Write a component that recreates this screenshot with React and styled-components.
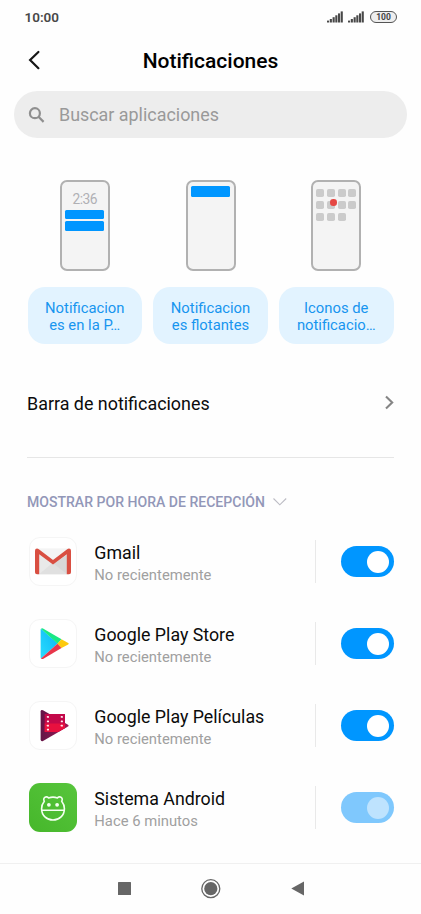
import React from "react";
import styled, { createGlobalStyle } from "styled-components";

const GlobalStyle = createGlobalStyle`
  * { box-sizing: border-box; }
  body {
    margin: 0;
    background: #fefefe;
    font-family: Roboto, "Noto Sans", sans-serif;
    color: #0b0b0b;
  }
  button { font: inherit; border: 0; padding: 0; background: none; color: inherit; }
  svg { display: block; flex: none; }
`;

const Screen = styled.div`
  width: 421px;
  height: 914px;
  display: flex;
  flex-direction: column;
  overflow: hidden;
`;

const StatusBar = styled.div`
  height: 34px;
  padding: 0 24px 0 24.5px;
  display: flex;
  align-items: center;
  justify-content: space-between;
`;

const Clock = styled.span`
  font-size: 13.5px;
  font-weight: 600;
  color: #484848;
`;

const StatusIcons = styled.div`
  display: flex;
  align-items: center;
  gap: 5px;
`;

const Battery = styled.span`
  width: 27px;
  height: 12px;
  margin-left: 1px;
  display: flex;
  align-items: center;
  justify-content: center;
  padding-top: 1px;
  border: 1.5px solid #555;
  border-radius: 6px;
  background: #eee;
  font-size: 8.5px;
  font-weight: 700;
  line-height: 9px;
  color: #444;
`;

const Header = styled.header`
  height: 57px;
  padding: 0 25px 4px;
  display: grid;
  grid-template-columns: 24px 1fr 24px;
  align-items: center;
`;

const Title = styled.h1`
  margin: 1px 0 0;
  text-align: center;
  font-size: 21px;
  line-height: 24px;
  font-weight: 500;
  color: #000;
`;

const SearchField = styled.label`
  height: 47px;
  margin: 0 14px;
  padding: 0 14px;
  display: flex;
  align-items: center;
  gap: 13px;
  border-radius: 24px;
  background: #ededed;
`;

const SearchHint = styled.span`
  padding-top: 1px;
  font-size: 17.9px;
  line-height: 22px;
  color: #999;
`;

const Styles = styled.section`
  margin: 42px 27.5px 0;
  display: grid;
  grid-template-columns: repeat(3, 114.5px);
  justify-content: space-between;
`;

const StyleOption = styled.div`
  display: flex;
  flex-direction: column;
  align-items: center;
  gap: 16px;
`;

const Phone = styled.div`
  width: 50px;
  height: 91px;
  padding: ${(p) => p.$top}px 3.5px 0;
  display: flex;
  flex-direction: column;
  gap: 2px;
  border: 2.4px solid #b1b1b1;
  border-radius: 7px;
  background: #f4f4f4;
`;

const PhoneClock = styled.span`
  height: 15.5px;
  text-align: center;
  font-size: 13.8px;
  line-height: 14px;
  letter-spacing: -0.5px;
  color: #b0b0b4;
`;

const Banner = styled.span`
  height: ${(p) => p.$height}px;
  flex: none;
  border-radius: 1.5px;
  background: #0096ff;
`;

const AppGrid = styled.div`
  position: relative;
  margin-left: -0.3px;
  display: grid;
  grid-template-columns: repeat(4, 8px);
  grid-auto-rows: 8px;
  gap: 4px 2.6px;
`;

const AppTile = styled.i`
  border-radius: 1.8px;
  background: #cbcbcb;
`;

const Dot = styled.b`
  position: absolute;
  left: 13.7px;
  top: 10px;
  width: 6.5px;
  height: 6.5px;
  border-radius: 50%;
  background: #e54743;
`;

const StyleButton = styled.button`
  width: 100%;
  height: 57px;
  padding-top: 2px;
  border-radius: 17px;
  background: #e2f3ff;
  font-size: 14.8px;
  line-height: 17px;
  color: #1795ef;
  white-space: pre-line;
`;

const SettingRow = styled.div`
  height: 114px;
  margin: 0 27px;
  padding-top: 5px;
  display: flex;
  align-items: center;
  justify-content: space-between;
  border-bottom: 1px solid #e6e6e6;
  font-size: 17.9px;
`;

const SortLabel = styled.div`
  height: 62.5px;
  padding: 25.5px 27px 0;
  display: flex;
  align-items: center;
  gap: 7.5px;
  font-size: 14.05px;
  font-weight: 500;
  color: #9297b8;
`;

const AppRow = styled.div`
  height: 82px;
  padding: 0 27.5px 0 28.5px;
  display: flex;
  align-items: center;
`;

const AppIcon = styled.div`
  width: 48.5px;
  height: 48.5px;
  flex: none;
  border-radius: 11px;
  border: ${(p) => (p.$filled ? "0" : "1px solid #f5f5f5")};
  background: ${(p) => (p.$filled ? "linear-gradient(40deg, #46b72b, #57c53c)" : "#fff")};
  display: grid;
  place-items: center;
`;

const AppText = styled.div`
  flex: 1;
  margin-left: 17.3px;
  padding-top: 5px;
  display: flex;
  flex-direction: column;
`;

const AppName = styled.span`
  font-size: 17.8px;
  line-height: 22px;
`;

const AppDetail = styled.span`
  font-size: 14.8px;
  line-height: 22px;
  color: #a0a0a0;
`;

const Rule = styled.div`
  width: 1px;
  height: 43px;
  margin-right: 25px;
  background: #e9e9e9;
`;

const Toggle = styled.button`
  width: 53px;
  height: 31px;
  padding-right: 5px;
  display: flex;
  align-items: center;
  justify-content: flex-end;
  border-radius: 16px;
  background: ${(p) => (p.$dim ? "#7fc8fd" : "#0096ff")};
`;

const Knob = styled.span`
  width: 22px;
  height: 22px;
  border-radius: 50%;
  background: ${(p) => (p.$dim ? "#bee3fe" : "#fff")};
`;

const NavBar = styled.nav`
  height: 51px;
  margin-top: auto;
  padding: 0 117px 1px 118px;
  display: flex;
  align-items: center;
  justify-content: space-between;
  border-top: 1px solid #f0f0f0;
`;

const Signal = () => (
  <svg width="16" height="12" viewBox="0 0 16 12" fill="#484848">
    <rect x="0" y="9.6" width="2.1" height="1.9" />
    <rect x="2.8" y="8" width="2.1" height="3.5" />
    <rect x="5.6" y="6.2" width="2.1" height="5.3" />
    <rect x="8.3" y="4.3" width="2.1" height="7.2" />
    <rect x="11" y="2.4" width="2.1" height="9.1" />
    <rect x="13.7" y="0.4" width="2.1" height="11.1" />
  </svg>
);

const BackIcon = () => (
  <svg width="24" height="24" viewBox="0 0 24 24" fill="none" stroke="#161616" strokeWidth="2.2">
    <path d="M13.4 3 5.1 11 13.4 19.2" strokeLinecap="round" />
  </svg>
);

const SearchIcon = () => (
  <svg width="18" height="18" viewBox="0 0 18 18" fill="none" stroke="#8f8f8f" strokeWidth="2.2">
    <circle cx="6.9" cy="7.2" r="5" />
    <path d="M10.5 10.8 15.6 15.9" />
  </svg>
);

const ChevronRight = () => (
  <svg width="10" height="16" viewBox="0 0 10 16" fill="none" stroke="#858585" strokeWidth="2.1">
    <path d="M2 1.5 8.2 7.5 2 13.6" />
  </svg>
);

const ChevronDown = () => (
  <svg width="14" height="9" viewBox="0 0 14 9" fill="none" stroke="#bcbcc4" strokeWidth="1.1">
    <path d="M0.5 0.5 6.8 6.8 13.2 0.5" />
  </svg>
);

const GmailIcon = () => (
  <svg width="36" height="27" viewBox="0 0 36 27">
    <rect x="1" y="0.8" width="34" height="25.5" rx="1.8" fill="#e9e9e9" />
    <path d="M4 26.3 18 14.5 32 26.3z" fill="#e0e0e0" />
    <path d="M32 7v19.3L18.5 15.8z" fill="#d8d8d8" />
    <path d="M3 .8h30L18 12.5z" fill="#f4f4f4" />
    <path d="M0 2.8Q0 .6 2 .6q1 0 1.8.6L18 12 32.2 1.2Q33 .6 34 .6q2 0 2 2.2v21.5q0 2-2 2h-2.2V6.2L18 16.6 4.2 6.2v20.1H2q-2 0-2-2z" fill="#d94f42" />
  </svg>
);

const PlayIcon = () => (
  <svg width="33" height="33" viewBox="-4 0 33 33">
    <defs>
      <linearGradient id="playBlue" x1="1" y1="0" x2="0" y2="1">
        <stop offset="0" stopColor="#08b6f4" />
        <stop offset="1" stopColor="#2bdcff" />
      </linearGradient>
    </defs>
    <path d="M1 1.8 17.7 16.5 1 31.5Q.6 31 .6 30V3Q.6 2.2 1 1.8z" fill="url(#playBlue)" />
    <path d="M1 1.8Q1.8.8 3 1.4L21.5 12.3 17.5 16.7z" fill="#19e886" />
    <path d="M21.5 12.3 28.2 16q1 .7 0 1.4L21.5 21 17.3 16.7z" fill="#fdc90d" />
    <path d="M1 31.5 17.4 16.7 21.5 21 3 32Q1.7 32.4 1 31.5z" fill="#e8364b" />
  </svg>
);

const MoviesIcon = () => (
  <svg width="33" height="33" viewBox="-4 0 33 33">
    <defs>
      <linearGradient id="movieShade" x1="0" y1="0" x2="1" y2="0">
        <stop offset="0" stopColor="#641547" />
        <stop offset="1" stopColor="#a01754" />
      </linearGradient>
    </defs>
    <path d="M.6 2.5Q.8.5 3 1.3L28 15.8q1.2.8 0 1.7L3 32Q.8 32.8.6 30.5z" fill="url(#movieShade)" />
    <path d="M4.7 5H25V19L18 23H4.7z" fill="#c3084a" />
    <path d="M4.7 14.5H25V19L18 23H4.7z" fill="#e8103f" />
    <g fill="#ffe9ef">
      {[7, 11.5, 15.8, 19.7].map((y) => <rect key={y} x="6.9" y={y} width="2.1" height="1.8" rx="0.4" />)}
      {[7, 11.5, 15.8].map((y) => <rect key={y} x="20.8" y={y} width="2.1" height="1.8" rx="0.4" />)}
    </g>
  </svg>
);

const AndroidIcon = () => (
  <svg width="26" height="28" viewBox="0 0 26 28" fill="none" stroke="#f3fff0" strokeWidth="1.6" strokeLinecap="round" strokeLinejoin="round">
    <path d="M4.3 7.2A2.6 2.6 0 1 1 8.6 3.9Q13 2.4 17.4 3.9A2.6 2.6 0 1 1 21.7 7.2Q24.4 10.5 24.4 14.7C24.4 21.4 19.3 26 13 26S1.6 21.4 1.6 14.7Q1.6 10.5 4.3 7.2z" />
    <path d="M1.8 16.2H24.2" />
    <circle cx="8.9" cy="10.8" r="1.1" fill="#f3fff0" />
    <circle cx="17.1" cy="10.8" r="1.1" fill="#f3fff0" />
  </svg>
);

const apps = [
  { name: "Gmail", detail: "No recientemente", Icon: GmailIcon },
  { name: "Google Play Store", detail: "No recientemente", Icon: PlayIcon },
  { name: "Google Play Películas", detail: "No recientemente", Icon: MoviesIcon },
  { name: "Sistema Android", detail: "Hace 6 minutos", Icon: AndroidIcon, system: true },
];

export default function App() {
  return (
    <Screen>
      <GlobalStyle />
      <StatusBar>
        <Clock>10:00</Clock>
        <StatusIcons>
          <Signal />
          <Signal />
          <Battery>100</Battery>
        </StatusIcons>
      </StatusBar>
      <Header>
        <BackIcon />
        <Title>Notificaciones</Title>
      </Header>
      <SearchField>
        <SearchIcon />
        <SearchHint>Buscar aplicaciones</SearchHint>
      </SearchField>
      <Styles>
        <StyleOption>
          <Phone $top={10}>
            <PhoneClock>2:36</PhoneClock>
            <Banner $height={9.5} />
            <Banner $height={9.5} />
          </Phone>
          <StyleButton>{"Notificacion\nes en la P…"}</StyleButton>
        </StyleOption>
        <StyleOption>
          <Phone $top={4}>
            <Banner $height={11} />
          </Phone>
          <StyleButton>{"Notificacion\nes flotantes"}</StyleButton>
        </StyleOption>
        <StyleOption>
          <Phone $top={7}>
            <AppGrid>
              {Array.from({ length: 11 }, (_, i) => <AppTile key={i} />)}
              <Dot />
            </AppGrid>
          </Phone>
          <StyleButton>{"Iconos de\nnotificacio…"}</StyleButton>
        </StyleOption>
      </Styles>
      <SettingRow>
        Barra de notificaciones
        <ChevronRight />
      </SettingRow>
      <SortLabel>
        MOSTRAR POR HORA DE RECEPCIÓN
        <ChevronDown />
      </SortLabel>
      {apps.map(({ name, detail, Icon, system }) => (
        <AppRow key={name}>
          <AppIcon $filled={system}>
            <Icon />
          </AppIcon>
          <AppText>
            <AppName>{name}</AppName>
            <AppDetail>{detail}</AppDetail>
          </AppText>
          <Rule />
          <Toggle $dim={system} aria-label={name}>
            <Knob $dim={system} />
          </Toggle>
        </AppRow>
      ))}
      <NavBar>
        <svg width="13" height="13" viewBox="0 0 13 13">
          <rect width="13" height="13" rx="0.5" fill="#666" />
        </svg>
        <svg width="20" height="20" viewBox="0 0 20 20">
          <circle cx="9.8" cy="9.7" r="9" fill="none" stroke="#666" strokeWidth="1.3" />
          <circle cx="9.8" cy="9.7" r="6.6" fill="#666" />
        </svg>
        <svg width="13" height="15" viewBox="0 0 13 15">
          <path d="M13 .5v14L.3 7.5z" fill="#666" />
        </svg>
      </NavBar>
    </Screen>
  );
}
